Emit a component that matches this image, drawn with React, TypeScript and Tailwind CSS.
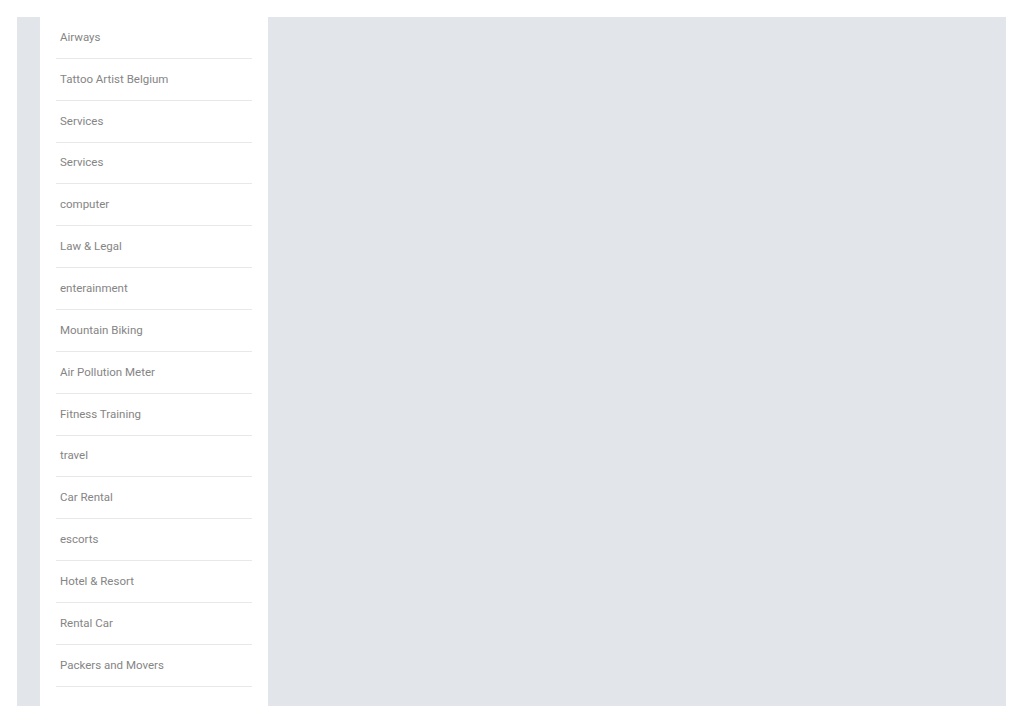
const items = [
  'Airways',
  'Tattoo Artist Belgium',
  'Services',
  'Services',
  'computer',
  'Law & Legal',
  'enterainment',
  'Mountain Biking',
  'Air Pollution Meter',
  'Fitness Training',
  'travel',
  'Car Rental',
  'escorts',
  'Hotel & Resort',
  'Rental Car',
  'Packers and Movers',
];

export default function App() {
  return (
    <div className="bg-white py-[17px] pl-[17px] pr-[18px] font-['Roboto',sans-serif]">
      <div className="flex h-[689px] bg-[#e2e5e9] pl-[23px]">
        <aside className="w-[228px] bg-white px-4">
          <ul>
            {items.map((item, i) => (
              <li
                key={i}
                className="flex h-[41.87px] items-center border-b border-[#e8e8e8] px-1 text-[11.5px] text-[#858585]"
              >
                {item}
              </li>
            ))}
          </ul>
        </aside>
        <main className="flex-1" />
      </div>
    </div>
  );
}
